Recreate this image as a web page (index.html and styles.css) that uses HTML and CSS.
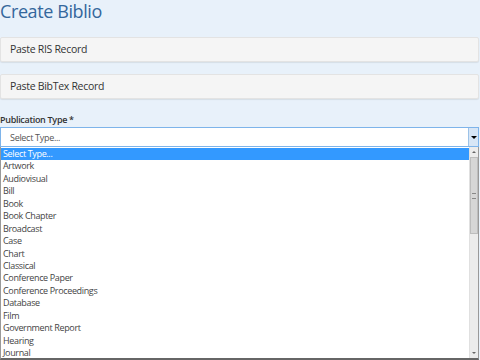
FILE: index.html
```html
<!DOCTYPE html>
<html lang="en">
<head>
  <meta charset="UTF-8">
  <title>Create Biblio</title>
  <link rel="stylesheet" href="styles.css">
</head>
<body>
<div class="page">

  <!-- Titulo -->
  <h1 class="title">Create Biblio</h1>

  <!-- Paneles para pegar registros -->
  <div class="panel">Paste RIS Record</div>
  <div class="panel">Paste BibTex Record</div>

  <!-- Tipo de publicacion -->
  <label class="field-label">Publication Type *</label>
  <div class="select-box">
    <span class="select-value">Select Type...</span>
    <span class="select-arrow"></span>
  </div>

  <div class="dropdown">
    <ul class="options">
      <li class="selected">Select Type...</li>
      <li>Artwork</li>
      <li>Audiovisual</li>
      <li>Bill</li>
      <li>Book</li>
      <li>Book Chapter</li>
      <li>Broadcast</li>
      <li>Case</li>
      <li>Chart</li>
      <li>Classical</li>
      <li>Conference Paper</li>
      <li>Conference Proceedings</li>
      <li>Database</li>
      <li>Film</li>
      <li>Government Report</li>
      <li>Hearing</li>
      <li>Journal</li>
    </ul>
    <div class="scrollbar">
      <div class="scroll-btn up"></div>
      <div class="scroll-track">
        <div class="scroll-thumb"><span class="grip"></span></div>
      </div>
      <div class="scroll-btn down"></div>
    </div>
  </div>

</div>
</body>
</html>
```

FILE: styles.css
```css
body {
  margin: 0;
  font-family: "Open Sans", Arial, sans-serif;
  background-color: #e8f1fa;
  overflow: hidden;
}

.page {
  width: 479px;
}

.title {
  margin: 0;
  padding-top: 0;
  font-size: 18px;
  font-weight: 400;
  letter-spacing: -0.4px;
  color: #34679c;
  line-height: 22px;
}

.panel {
  margin-top: 15px;
  height: 23px;
  line-height: 23px;
  padding-left: 9px;
  font-size: 10.5px;
  letter-spacing: -0.3px;
  color: #333;
  background-color: #f5f5f5;
  border: 1px solid #e3e3e3;
  border-radius: 2px;
  box-shadow: 0 1px 1px rgba(0,0,0,.08);
}

.panel + .panel {
  margin-top: 12px;
}

.field-label {
  display: block;
  margin-top: 14px;
  font-size: 9px;
  font-weight: 600;
  letter-spacing: -0.3px;
  color: #333;
  line-height: 14px;
}

.select-box {
  display: flex;
  align-items: center;
  height: 18px;
  background: #fff;
  border: 1px solid #7eb4ea;
}

.select-value {
  flex: 1;
  padding-left: 9px;
  font-size: 9px;
  letter-spacing: -0.3px;
  color: #555;
}

.select-arrow {
  width: 9px;
  height: 18px;
  background: #d7e6f6;
  border-left: 1px solid #9cc2e8;
  display: flex;
  align-items: center;
  justify-content: center;
}

.select-arrow::after {
  content: "";
  border-left: 3px solid transparent;
  border-right: 3px solid transparent;
  border-top: 3px solid #000;
}

.dropdown {
  display: flex;
  background: #fff;
  border: 1px solid #999;
  border-top: none;
  border-bottom: 2px solid #666;
  height: 211px;
}

.options {
  flex: 1;
  list-style: none;
  margin: 0;
  padding: 1px 0 0;
  font-size: 9px;
  letter-spacing: -0.35px;
  color: #444;
}

.options li {
  height: 12.45px;
  line-height: 12px;
  padding-left: 2px;
}

.options li.selected {
  background-color: #3399ff;
  color: #fff;
}

.scrollbar {
  width: 8px;
  display: flex;
  flex-direction: column;
  background: #ececec;
  border-left: 1px solid #e0e0e0;
}

.scroll-btn {
  height: 10px;
  display: flex;
  align-items: center;
  justify-content: center;
}

.scroll-btn.up::after {
  content: "";
  border-left: 2px solid transparent;
  border-right: 2px solid transparent;
  border-bottom: 2px solid #666;
}

.scroll-btn.down::after {
  content: "";
  border-left: 2px solid transparent;
  border-right: 2px solid transparent;
  border-top: 2px solid #666;
}

.scroll-track {
  flex: 1;
}

.scroll-thumb {
  height: 77px;
  background: #d6d6d6;
  border: 1px solid #bdbdbd;
  box-sizing: border-box;
  display: flex;
  align-items: center;
  justify-content: center;
}

.grip {
  width: 4px;
  height: 4px;
  border-top: 1px solid #888;
  border-bottom: 1px solid #888;
}
```
